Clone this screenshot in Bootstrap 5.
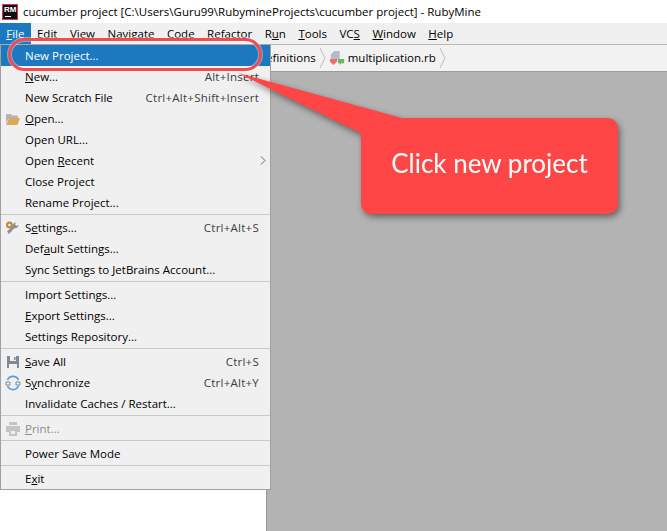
<!DOCTYPE html>
<html lang="en">
<head>
<meta charset="utf-8">
<title>cucumber project - RubyMine</title>
<link href="https://cdn.jsdelivr.net/npm/bootstrap@5.3.0/dist/css/bootstrap.min.css" rel="stylesheet">
<style>
html,body{height:531px;overflow:hidden;background:#fff}
body{font-family:"Open Sans","Noto Sans",sans-serif;font-size:11.5px;color:#000;position:relative;width:667px}
.title-row{height:23px;padding-left:2px;gap:5px;font-size:11.5px;line-height:23px;white-space:nowrap}
.rm-logo{width:16px;height:16px;background:#111;border:1px solid #e0305c;color:#fff;font:700 8px/9px "Liberation Sans",sans-serif;padding-left:1px;position:relative}
.rm-logo i{position:absolute;left:2px;bottom:2px;width:6px;height:1px;background:#fff}
.menu-row{height:22px;background:#f0f0f0;border-bottom:1px solid #b9b9b9;line-height:21px;font-size:11.5px}
.mb-item{padding:0 6.25px;height:21px}
.mb-item.on{background:#1c79c0;color:#fff}
.crumb-row{height:27px;background:#f2f2f2;border-bottom:1px solid #9b9b9b;font-size:11.5px;line-height:26px;padding-left:259px;gap:3px;white-space:nowrap}
.work{height:460px}
.left-pane{width:266px;background:#fff}
.gray-pane{background:#b3b3b3;border-left:1px solid #999}
.ide-menu{position:absolute;left:0;top:44px;width:271px;margin:0;padding:0;background:#f0f0f0;border:1px solid #a0a0a0;border-top:1px solid #a8a8a8;border-radius:0;min-width:0;font-size:11.5px;color:#000;display:block}
.ide-menu .m-row{height:21px;line-height:21px;padding:0 11px 0 24px;position:relative;color:#000;white-space:nowrap;justify-content:space-between}
.ide-menu .m-row.sel{background:#1c79c0;color:#fff}
.ide-menu .m-row.off{color:#8c8c8c}
.keys{color:#3d3d3d;letter-spacing:.25px}
.m-ico{position:absolute;left:4px;top:3px;width:16px;height:16px}
.m-arrow{position:absolute;right:4px;top:6px;width:6px;height:9px}
.m-sep{height:4px;position:relative}
.m-sep::after{content:"";position:absolute;left:0;right:0;top:1px;height:1px;background:#c9c9c9}
.overlay{position:absolute;left:0;top:0;width:667px;height:531px;filter:drop-shadow(2px 3px 3px rgba(0,0,0,.45));pointer-events:none}
.tail{position:absolute;left:0;top:0}
.call-box{position:absolute;left:361px;top:118px;width:257px;height:96px;background:#ff4646;border-radius:10px;color:#fff;font-family:"Lato",sans-serif;font-size:26px;font-weight:400;line-height:1;padding-bottom:6px}
.ring{position:absolute;left:0;top:0;pointer-events:none}
</style>
</head>
<body>
<div class="d-flex align-items-center title-row">
  <div class="rm-logo">RM<i></i></div>
  <span>cucumber project [C:\Users\Guru99\RubymineProjects\cucumber project] - RubyMine</span>
</div>
<div class="d-flex menu-row">
  <span class="mb-item on"><u>F</u>ile</span>
  <span class="mb-item"><u>E</u>dit</span>
  <span class="mb-item"><u>V</u>iew</span>
  <span class="mb-item"><u>N</u>avigate</span>
  <span class="mb-item"><u>C</u>ode</span>
  <span class="mb-item"><u>R</u>efactor</span>
  <span class="mb-item">R<u>u</u>n</span>
  <span class="mb-item"><u>T</u>ools</span>
  <span class="mb-item">VC<u>S</u></span>
  <span class="mb-item"><u>W</u>indow</span>
  <span class="mb-item"><u>H</u>elp</span>
</div>
<div class="d-flex align-items-center crumb-row">
  <span>definitions</span>
  <svg width="7" height="22" viewBox="0 0 7 22"><path d="M1 1l5 10-5 10" fill="none" stroke="#bdbdbd"/></svg>
  <svg width="16" height="16" viewBox="0 0 18 18"><path d="M6 1h6v10H2V5z" fill="#b4bcc4"/><path d="M1 10h8v3l-4 4-4-4z" fill="#f26a6a"/><path d="M10 10h7v5h-3l-2 2v-2h-2z" fill="#6cb85c"/></svg>
  <span>multiplication.rb</span>
  <svg width="7" height="22" viewBox="0 0 7 22"><path d="M1 1l5 10-5 10" fill="none" stroke="#bdbdbd"/></svg>
</div>
<div class="d-flex work">
  <div class="left-pane"></div>
  <div class="gray-pane flex-grow-1"></div>
</div>

<div class="ide-menu">
  <div class="d-flex m-row sel"><span>New Project...</span></div>
  <div class="d-flex m-row"><span><u>N</u>ew...</span><span class="keys">Alt+Insert</span></div>
  <div class="d-flex m-row"><span>New Scratch File</span><span class="keys">Ctrl+Alt+Shift+Insert</span></div>
  <div class="d-flex m-row">
    <svg class="m-ico" viewBox="0 0 16 16"><path d="M1 12V3h5l1 1.500h6V7H4z" fill="#b5b5b5"/><path d="M4 7h11l-2.500 7H1z" fill="#dcaa5c"/></svg>
    <span><u>O</u>pen...</span></div>
  <div class="d-flex m-row"><span>Open URL...</span></div>
  <div class="d-flex m-row"><span>Open <u>R</u>ecent</span>
    <svg class="m-arrow" viewBox="0 0 6 9"><path d="M1 .5l4 4-4 4" fill="none" stroke="#666"/></svg></div>
  <div class="d-flex m-row"><span>Close Project</span></div>
  <div class="d-flex m-row"><span>Rename Project...</span></div>
  <div class="m-sep"></div>
  <div class="d-flex m-row">
    <svg class="m-ico" viewBox="0 0 16 16"><path d="M11 2.500a3 3 0 0 0-3 3.500l-6 5.500 2 2.500 5.500-6a3 3 0 0 0 4-3l-2 1-1.500-1.500z" fill="#8a8f94"/><circle cx="4.500" cy="5" r="3.500" fill="#c08a45"/><circle cx="4.500" cy="5" r="1.300" fill="#f0f0f0"/></svg>
    <span>S<u>e</u>ttings...</span><span class="keys">Ctrl+Alt+S</span></div>
  <div class="d-flex m-row"><span>Def<u>a</u>ult Settings...</span></div>
  <div class="d-flex m-row"><span>Sync Settings to JetBrains Account...</span></div>
  <div class="m-sep"></div>
  <div class="d-flex m-row"><span>Import Settings...</span></div>
  <div class="d-flex m-row"><span><u>E</u>xport Settings...</span></div>
  <div class="d-flex m-row"><span>Settings Repository...</span></div>
  <div class="m-sep"></div>
  <div class="d-flex m-row">
    <svg class="m-ico" viewBox="0 0 16 16"><path d="M2 2h12v12H2z" fill="#7f8a94"/><path d="M5 2h6v5H5z" fill="#f0f0f0"/><path d="M4 10h8v4H4z" fill="#f0f0f0"/><path d="M9 3h1.500v3H9z" fill="#7f8a94"/></svg>
    <span><u>S</u>ave All</span><span class="keys">Ctrl+S</span></div>
  <div class="d-flex m-row">
    <svg class="m-ico" viewBox="0 0 16 16"><path d="M2.500 5a6 6 0 0 1 11 0M13.500 11a6 6 0 0 1-11 0" fill="none" stroke="#5b9bd0" stroke-width="1.600"/><path d="M1 7h4v3H1zM11 7h4v3h-4z" fill="none" stroke="#7f8a94"/></svg>
    <span>S<u>y</u>nchronize</span><span class="keys">Ctrl+Alt+Y</span></div>
  <div class="d-flex m-row"><span>Invalidate Caches / Restart...</span></div>
  <div class="m-sep"></div>
  <div class="d-flex m-row off">
    <svg class="m-ico" viewBox="0 0 16 16"><path d="M4 1h8v3H4zM1 5h14v6h-3v4H4v-4H1z" fill="#c4c4c4"/><path d="M6 10h4v3H6z" fill="#f0f0f0"/></svg>
    <span><u>P</u>rint...</span></div>
  <div class="m-sep"></div>
  <div class="d-flex m-row"><span>Power Save Mode</span></div>
  <div class="m-sep"></div>
  <div class="d-flex m-row"><span>E<u>x</u>it</span></div>
</div>

<div class="overlay">
  <svg class="tail" width="667" height="531" viewBox="0 0 667 531"><polygon points="238,73 402,118 372,140 358,132" fill="#ff4646"/></svg>
  <div class="call-box d-flex align-items-center justify-content-center">Click new project</div>
</div>
<svg class="ring" width="667" height="531" viewBox="0 0 667 531"><rect x="9.500" y="39.500" width="251" height="30" rx="15" fill="none" stroke="#fff" stroke-opacity=".4" stroke-width="5"/><rect x="9.500" y="39.500" width="251" height="30" rx="15" fill="none" stroke="#f24a4f" stroke-width="3"/></svg>
<script src="https://cdn.jsdelivr.net/npm/bootstrap@5.3.0/dist/js/bootstrap.bundle.min.js"></script>
</body>
</html>
